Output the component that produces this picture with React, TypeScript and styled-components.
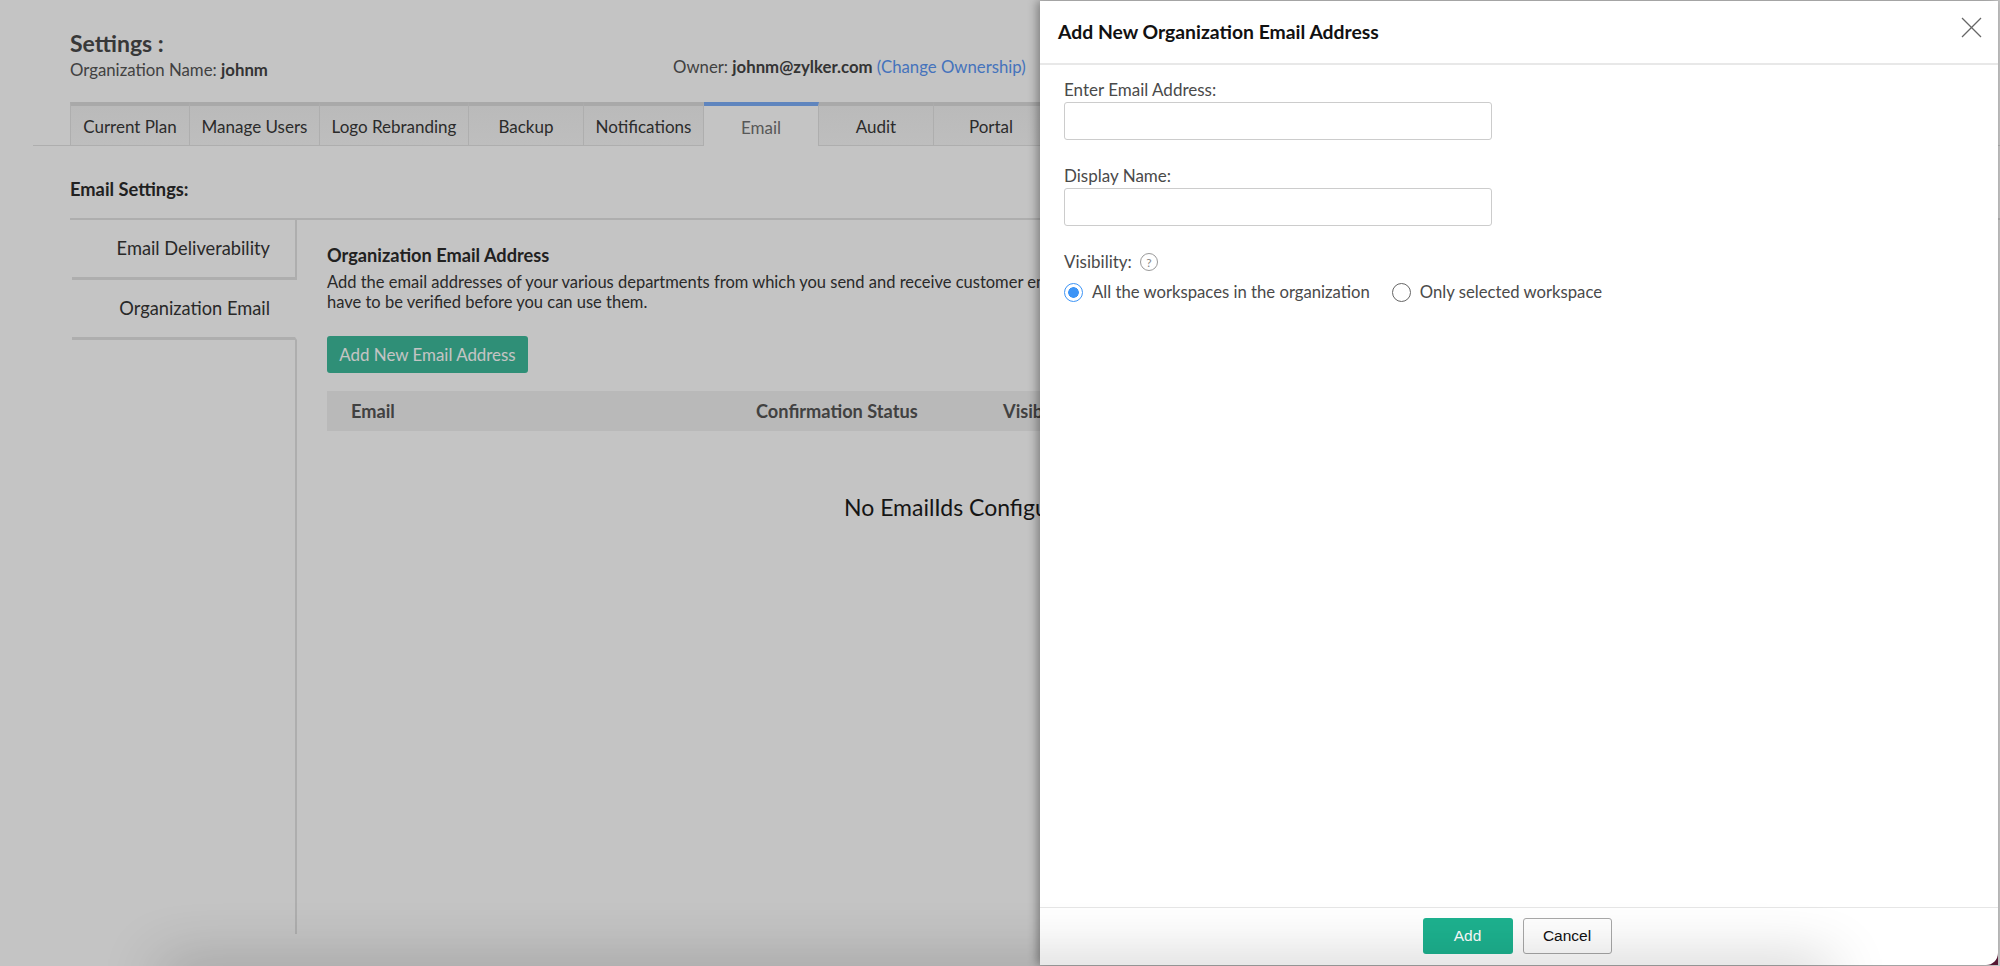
import React from 'react';
import styled, { createGlobalStyle } from 'styled-components';

const GlobalStyle = createGlobalStyle`
  html, body {
    margin: 0;
    height: 100%;
    overflow: hidden;
    background: #fff;
    font-family: Lato, "Open Sans", sans-serif;
    color: #222;
  }
  #root { height: 100%; }
`;

const Page = styled.div`
  position: relative;
  height: 100%;
  overflow: hidden;
`;

const Main = styled.main`
  height: 100%;
  box-sizing: border-box;
  padding: 29px 0 0 70px;
  display: flex;
  flex-direction: column;
`;

const Header = styled.header`
  display: flex;
  height: 73px;
  flex: none;
`;

const TitleBlock = styled.div`
  width: 603px;
`;

const PageTitle = styled.h1`
  margin: 0;
  font-size: 23px;
  line-height: 28px;
  font-weight: 700;
  color: #4a4a4a;
`;

const OrgName = styled.div`
  font-size: 16.8px;
  line-height: 25px;
  color: #555;
  b { color: #444; }
`;

const Owner = styled.div`
  font-size: 16.75px;
  line-height: 26px;
  margin-top: 25px;
  color: #555;
  white-space: nowrap;
  b { color: #444; }
`;

const ChangeLink = styled.a`
  color: #5a96f5;
`;

const TabBar = styled.nav`
  display: flex;
  margin-left: -37px;
  padding-left: 37px;
  height: 43px;
  border-bottom: 1px solid #e3e3e3;
  flex: none;
`;

const Tab = styled.div<{ $w: number; $active?: boolean }>`
  width: ${p => p.$w}px;
  flex: none;
  box-sizing: border-box;
  display: flex;
  align-items: center;
  justify-content: center;
  padding-top: 2px;
  font-size: 17px;
  white-space: nowrap;
  color: ${p => (p.$active ? '#737373' : '#393939')};
  background: ${p => (p.$active ? '#fff' : 'linear-gradient(#f3f3f3, #f7f7f7)')};
  border-top: 4px solid ${p => (p.$active ? '#7cadf8' : '#dcdcdc')};
  border-right: 1px solid #e3e3e3;
  margin-bottom: ${p => (p.$active ? '-1px' : '0')};
  &:first-child { border-left: 1px solid #e3e3e3; }
`;

const SectionTitle = styled.h2`
  margin: 0;
  height: 72px;
  box-sizing: border-box;
  padding-top: 13px;
  flex: none;
  display: flex;
  align-items: center;
  font-size: 18.3px;
  font-weight: 700;
  color: #2c2c2c;
`;

const Body = styled.div`
  display: flex;
  border-top: 2px solid #e3e3e3;
  height: 716px;
  box-sizing: border-box;
  flex: none;
`;

const Sidebar = styled.aside`
  width: 227px;
  flex: none;
  display: flex;
  flex-direction: column;
`;

const SideItem = styled.div<{ $active?: boolean }>`
  height: 60px;
  box-sizing: border-box;
  flex: none;
  display: flex;
  align-items: center;
  justify-content: flex-end;
  padding: 0 25px 1px 0;
  font-size: 18.25px;
  color: #363636;
  border-bottom: 3px solid #e3e3e3;
  border-right: 2px solid ${p => (p.$active ? 'transparent' : '#e3e3e3')};
  margin-left: 2px;
`;

const SideRest = styled.div`
  flex: 1;
  border-right: 2px solid #e3e3e3;
`;

const Content = styled.section`
  padding: 24px 0 0 30px;
  width: 743px;
  box-sizing: border-box;
  overflow: hidden;
  flex: none;
`;

const ContentTitle = styled.h3`
  margin: 0;
  font-size: 18.2px;
  line-height: 22px;
  font-weight: 700;
  color: #2c2c2c;
`;

const Description = styled.p`
  margin: 6px 0 0;
  font-size: 16.5px;
  line-height: 20px;
  color: #363636;
  white-space: nowrap;
`;

const PrimaryButton = styled.button`
  display: block;
  margin-top: 24px;
  width: 201px;
  height: 37px;
  border: 0;
  border-radius: 3px;
  background: #3ebb9b;
  color: #fff;
  font-family: inherit;
  font-size: 16.9px;
  padding: 0;
`;

const TableHead = styled.div`
  margin-top: 18px;
  width: 1000px;
  height: 40px;
  display: grid;
  grid-template-columns: 405px 247px 1fr;
  align-items: center;
  padding-left: 24px;
  background: #f1f1f1;
  font-size: 18.2px;
  font-weight: 700;
  color: #555;
`;

const EmptyText = styled.div`
  margin: 62px 0 0 517px;
  font-size: 23px;
  line-height: 28px;
  color: #1c1c1c;
  white-space: nowrap;
`;

const Mask = styled.div`
  position: absolute;
  inset: 0;
  background: rgba(0, 0, 0, 0.23);
`;

const Corner = styled.div`
  position: absolute;
  right: 2px;
  bottom: 1px;
  width: 14px;
  height: 14px;
  background: #5c1836;
`;

const Drawer = styled.div`
  position: absolute;
  top: 1px;
  right: 2px;
  bottom: 1px;
  left: 1040px;
  display: flex;
  flex-direction: column;
  background: #fff;
  border-bottom-right-radius: 12px;
  box-shadow: -3px 0 10px rgba(0, 0, 0, 0.35);
`;

const DrawerHeader = styled.div`
  height: 60px;
  flex: none;
  display: flex;
  align-items: center;
  justify-content: space-between;
  padding: 0 16px 2px 18px;
  border-bottom: 2px solid #e8e8e8;
`;

const DrawerTitle = styled.h2`
  margin: 0;
  font-size: 19.35px;
  font-weight: 700;
  color: #111;
`;

const CloseIcon = styled.svg`
  width: 21px;
  height: 21px;
  stroke: #666;
  stroke-width: 1.3;
  margin-top: -8px;
`;

const DrawerBody = styled.div`
  flex: 1;
  padding: 14px 24px 0;
`;

const Label = styled.label`
  display: block;
  font-size: 17px;
  line-height: 22px;
  color: #4a4a4a;
`;

const TextInput = styled.input`
  display: block;
  box-sizing: border-box;
  width: 428px;
  height: 38px;
  margin: 1px 0 25px;
  border: 1px solid #ccc;
  border-radius: 3px;
  background: #fff;
`;

const VisibilityRow = styled.div`
  display: flex;
  align-items: center;
  gap: 8px;
  height: 22px;
`;

const HelpBadge = styled.span`
  width: 18px;
  height: 18px;
  box-sizing: border-box;
  display: inline-flex;
  align-items: center;
  justify-content: center;
  border: 1px solid #999;
  border-radius: 50%;
  font-size: 12px;
  color: #888;
`;

const RadioRow = styled.div`
  display: flex;
  align-items: center;
  margin-top: 9px;
  height: 20px;
`;

const RadioOption = styled.label`
  display: flex;
  align-items: center;
  gap: 9px;
  font-size: 16.7px;
  color: #4a4a4a;
  margin-right: 22px;
  white-space: nowrap;
`;

const RadioInput = styled.input`
  appearance: none;
  box-sizing: border-box;
  width: 19px;
  height: 19px;
  margin: 0;
  border-radius: 50%;
  border: 1.5px solid #666;
  background: #fff;
  &:checked {
    border-color: #3d94f6;
    background: radial-gradient(circle, #3d94f6 0 5px, #fff 5.6px);
  }
`;

const DrawerFooter = styled.div`
  height: 58px;
  box-sizing: border-box;
  flex: none;
  display: flex;
  justify-content: center;
  gap: 10px;
  padding: 10px 4px 0 0;
  border-top: 1px solid #e6e6e6;
`;

const FooterButton = styled.button<{ $primary?: boolean }>`
  width: ${p => (p.$primary ? 90 : 89)}px;
  height: 36px;
  padding: 0;
  border-radius: 3px;
  font-family: "Liberation Sans", Arial, sans-serif;
  font-size: 15.5px;
  color: ${p => (p.$primary ? '#fff' : '#111')};
  background: ${p => (p.$primary ? '#1db28f' : '#fff')};
  border: ${p => (p.$primary ? '0' : '1px solid #a8a8a8')};
`;

const BottomShade = styled.div`
  position: absolute;
  left: 160px;
  right: 170px;
  bottom: -26px;
  height: 26px;
  box-shadow: 0 0 60px rgba(0, 0, 0, 0.3);
  pointer-events: none;
`;

const tabs = [
  { label: 'Current Plan', w: 120 },
  { label: 'Manage Users', w: 130 },
  { label: 'Logo Rebranding', w: 149 },
  { label: 'Backup', w: 115 },
  { label: 'Notifications', w: 120 },
  { label: 'Email', w: 115, active: true },
  { label: 'Audit', w: 115 },
  { label: 'Portal', w: 115 },
];

export default function App() {
  return (
    <Page>
      <GlobalStyle />
      <Main>
        <Header>
          <TitleBlock>
            <PageTitle>Settings :</PageTitle>
            <OrgName>Organization Name: <b>johnm</b></OrgName>
          </TitleBlock>
          <Owner>Owner: <b>johnm@zylker.com</b> <ChangeLink>(Change Ownership)</ChangeLink></Owner>
        </Header>
        <TabBar>
          {tabs.map(t => (
            <Tab key={t.label} $w={t.w} $active={t.active}>{t.label}</Tab>
          ))}
        </TabBar>
        <SectionTitle>Email Settings:</SectionTitle>
        <Body>
          <Sidebar>
            <SideItem>Email Deliverability</SideItem>
            <SideItem $active>Organization Email</SideItem>
            <SideRest />
          </Sidebar>
          <Content>
            <ContentTitle>Organization Email Address</ContentTitle>
            <Description>
              Add the email addresses of your various departments from which you send and receive customer emails. These email addresses
              <br />
              have to be verified before you can use them.
            </Description>
            <PrimaryButton>Add New Email Address</PrimaryButton>
            <TableHead>
              <span>Email</span>
              <span>Confirmation Status</span>
              <span>Visibility</span>
            </TableHead>
            <EmptyText>No EmailIds Configured</EmptyText>
          </Content>
        </Body>
      </Main>
      <Mask />
      <Corner />
      <Drawer>
        <DrawerHeader>
          <DrawerTitle>Add New Organization Email Address</DrawerTitle>
          <CloseIcon viewBox="0 0 21 21">
            <line x1="1" y1="1" x2="20" y2="20" />
            <line x1="20" y1="1" x2="1" y2="20" />
          </CloseIcon>
        </DrawerHeader>
        <DrawerBody>
          <Label>Enter Email Address:</Label>
          <TextInput type="text" />
          <Label>Display Name:</Label>
          <TextInput type="text" />
          <VisibilityRow>
            <Label>Visibility:</Label>
            <HelpBadge>?</HelpBadge>
          </VisibilityRow>
          <RadioRow>
            <RadioOption>
              <RadioInput type="radio" name="visibility" defaultChecked />
              All the workspaces in the organization
            </RadioOption>
            <RadioOption>
              <RadioInput type="radio" name="visibility" />
              Only selected workspace
            </RadioOption>
          </RadioRow>
        </DrawerBody>
        <DrawerFooter>
          <FooterButton $primary>Add</FooterButton>
          <FooterButton>Cancel</FooterButton>
        </DrawerFooter>
      </Drawer>
      <BottomShade />
    </Page>
  );
}
